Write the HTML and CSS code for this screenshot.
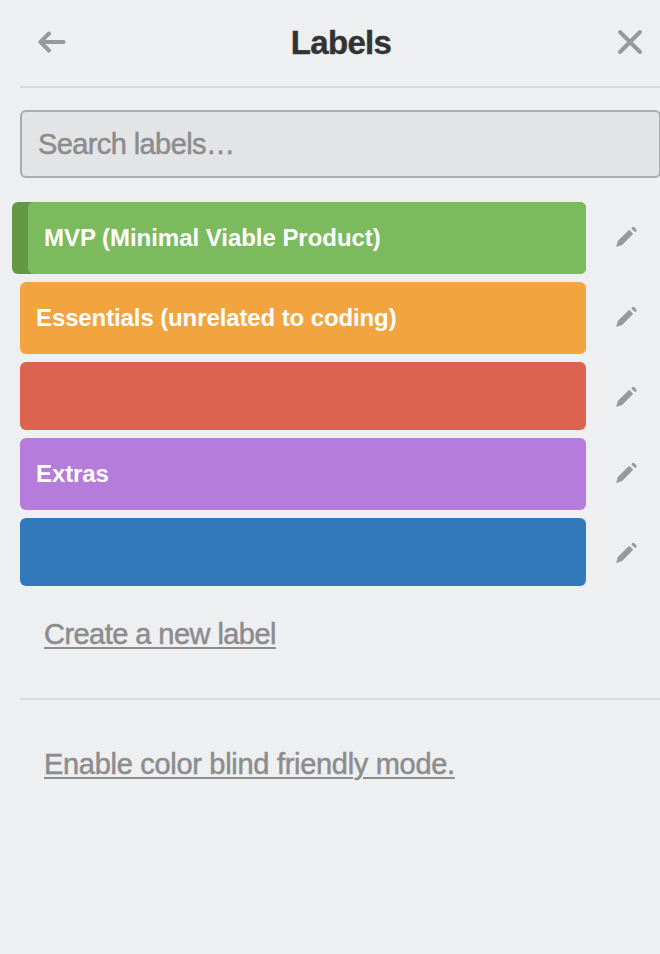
FILE: index.html
```html
<!DOCTYPE html>
<html lang="en">
<head>
<meta charset="utf-8">
<title>Labels</title>
<link rel="stylesheet" href="styles.css">
</head>
<body>
<svg class="defs" width="0" height="0"><symbol id="pencil" viewBox="0 0 24 24"><path d="M1.200 22L2.800 16 14.200 4.800 18.200 8.800 7.200 20zM16.300 3.500l1.200-1.400q.8-.7 1.600 0l2.200 2.200q.8.900 0 1.700l-1.200 1.300z"/></symbol></svg>
<main class="panel">
  <header class="header">
    <button class="icon-button" aria-label="Back"><svg width="28" height="24" viewBox="0 0 28 24"><path d="M11 3.500L2.500 12l8.500 8.500M2.500 12h23"/></svg></button>
    <h1 class="title">Labels</h1>
    <button class="icon-button" aria-label="Close"><svg width="28" height="28" viewBox="0 0 28 28"><path d="M4 4l20 20M24 4L4 24"/></svg></button>
  </header>
  <input class="search" type="text" placeholder="Search labels…">
  <ul class="labels">
    <li class="row"><span class="label green selected"><span class="text">MVP (Minimal Viable Product)</span></span><svg class="edit"><use href="#pencil"/></svg></li>
    <li class="row"><span class="label orange"><span class="text">Essentials (unrelated to coding)</span></span><svg class="edit"><use href="#pencil"/></svg></li>
    <li class="row"><span class="label red empty"></span><svg class="edit"><use href="#pencil"/></svg></li>
    <li class="row"><span class="label purple"><span class="text">Extras</span></span><svg class="edit"><use href="#pencil"/></svg></li>
    <li class="row"><span class="label blue empty"></span><svg class="edit"><use href="#pencil"/></svg></li>
  </ul>
  <a class="link create"><span class="text">Create a new label</span></a>
  <hr class="divider">
  <a class="link mode"><span class="text">Enable color blind friendly mode.</span></a>
</main>
</body>
</html>
```
FILE: styles.css
```css
* { box-sizing: border-box; }
body { margin: 0; height: 954px; overflow: hidden; background: #edeff0; font-family: "Liberation Sans", Arial, sans-serif; color: #333; }
.defs { display: block; height: 0; }
.panel { padding-left: 20px; }
.header { height: 88px; border-bottom: 2px solid #d8dadc; display: flex; align-items: center; justify-content: space-between; padding: 0 16px 2px 18px; }
.icon-button { border: 0; padding: 0; background: none; display: flex; }
.icon-button svg { fill: none; stroke: #999; stroke-width: 4; stroke-linecap: round; stroke-linejoin: round; }
.title { margin: 0; padding-top: 2px; font-size: 33px; letter-spacing: -0.7px; -webkit-text-stroke: 0.4px; }
.search { display: block; margin: 22px 0 0; width: 641px; height: 68px; border: 2px solid #a5adb3; border-radius: 6px; background: #e2e4e6; padding: 0 16px; font: 29px "Liberation Sans", sans-serif; letter-spacing: -0.6px; }
.search::placeholder { color: #8c8c8c; opacity: 1; -webkit-text-stroke: 0.5px; }
.labels { list-style: none; margin: 24px 0 0; padding: 0; display: grid; gap: 8px; }
.row { display: flex; }
.label { width: 566px; height: 72px; border-radius: 6px; padding: 0 16px; display: flex; align-items: center; color: #fff; font-weight: 700; font-size: 24px; letter-spacing: -0.11px; }
.empty { height: 68px; }
.green { background: #7bbb5e; }
.orange { background: #f2a441; }
.red { background: #db634f; }
.purple { background: #b57cdb; }
.blue { background: #3179ba; }
.selected { width: 574px; margin-left: -8px; padding: 0; background: #659846; letter-spacing: -0.04px; }
.selected .text { flex: 1; margin-left: 16px; padding-left: 16px; line-height: 72px; border-radius: 6px; background: #7bbb5e; }
.edit { width: 24px; height: 24px; margin: 23px 0 0 29px; fill: #999; }
.link { display: block; margin-left: 24px; font-size: 29px; line-height: 36px; color: #8c8c8c; text-decoration: underline; text-decoration-thickness: 2px; text-underline-offset: 3px; letter-spacing: -0.55px; -webkit-text-stroke: 0.5px; }
.create { margin-top: 30px; }
.divider { margin: 46px 0 0; border: 0; height: 2px; background: #d8dadc; }
.mode { margin-top: 46px; letter-spacing: -0.3px; }
```
